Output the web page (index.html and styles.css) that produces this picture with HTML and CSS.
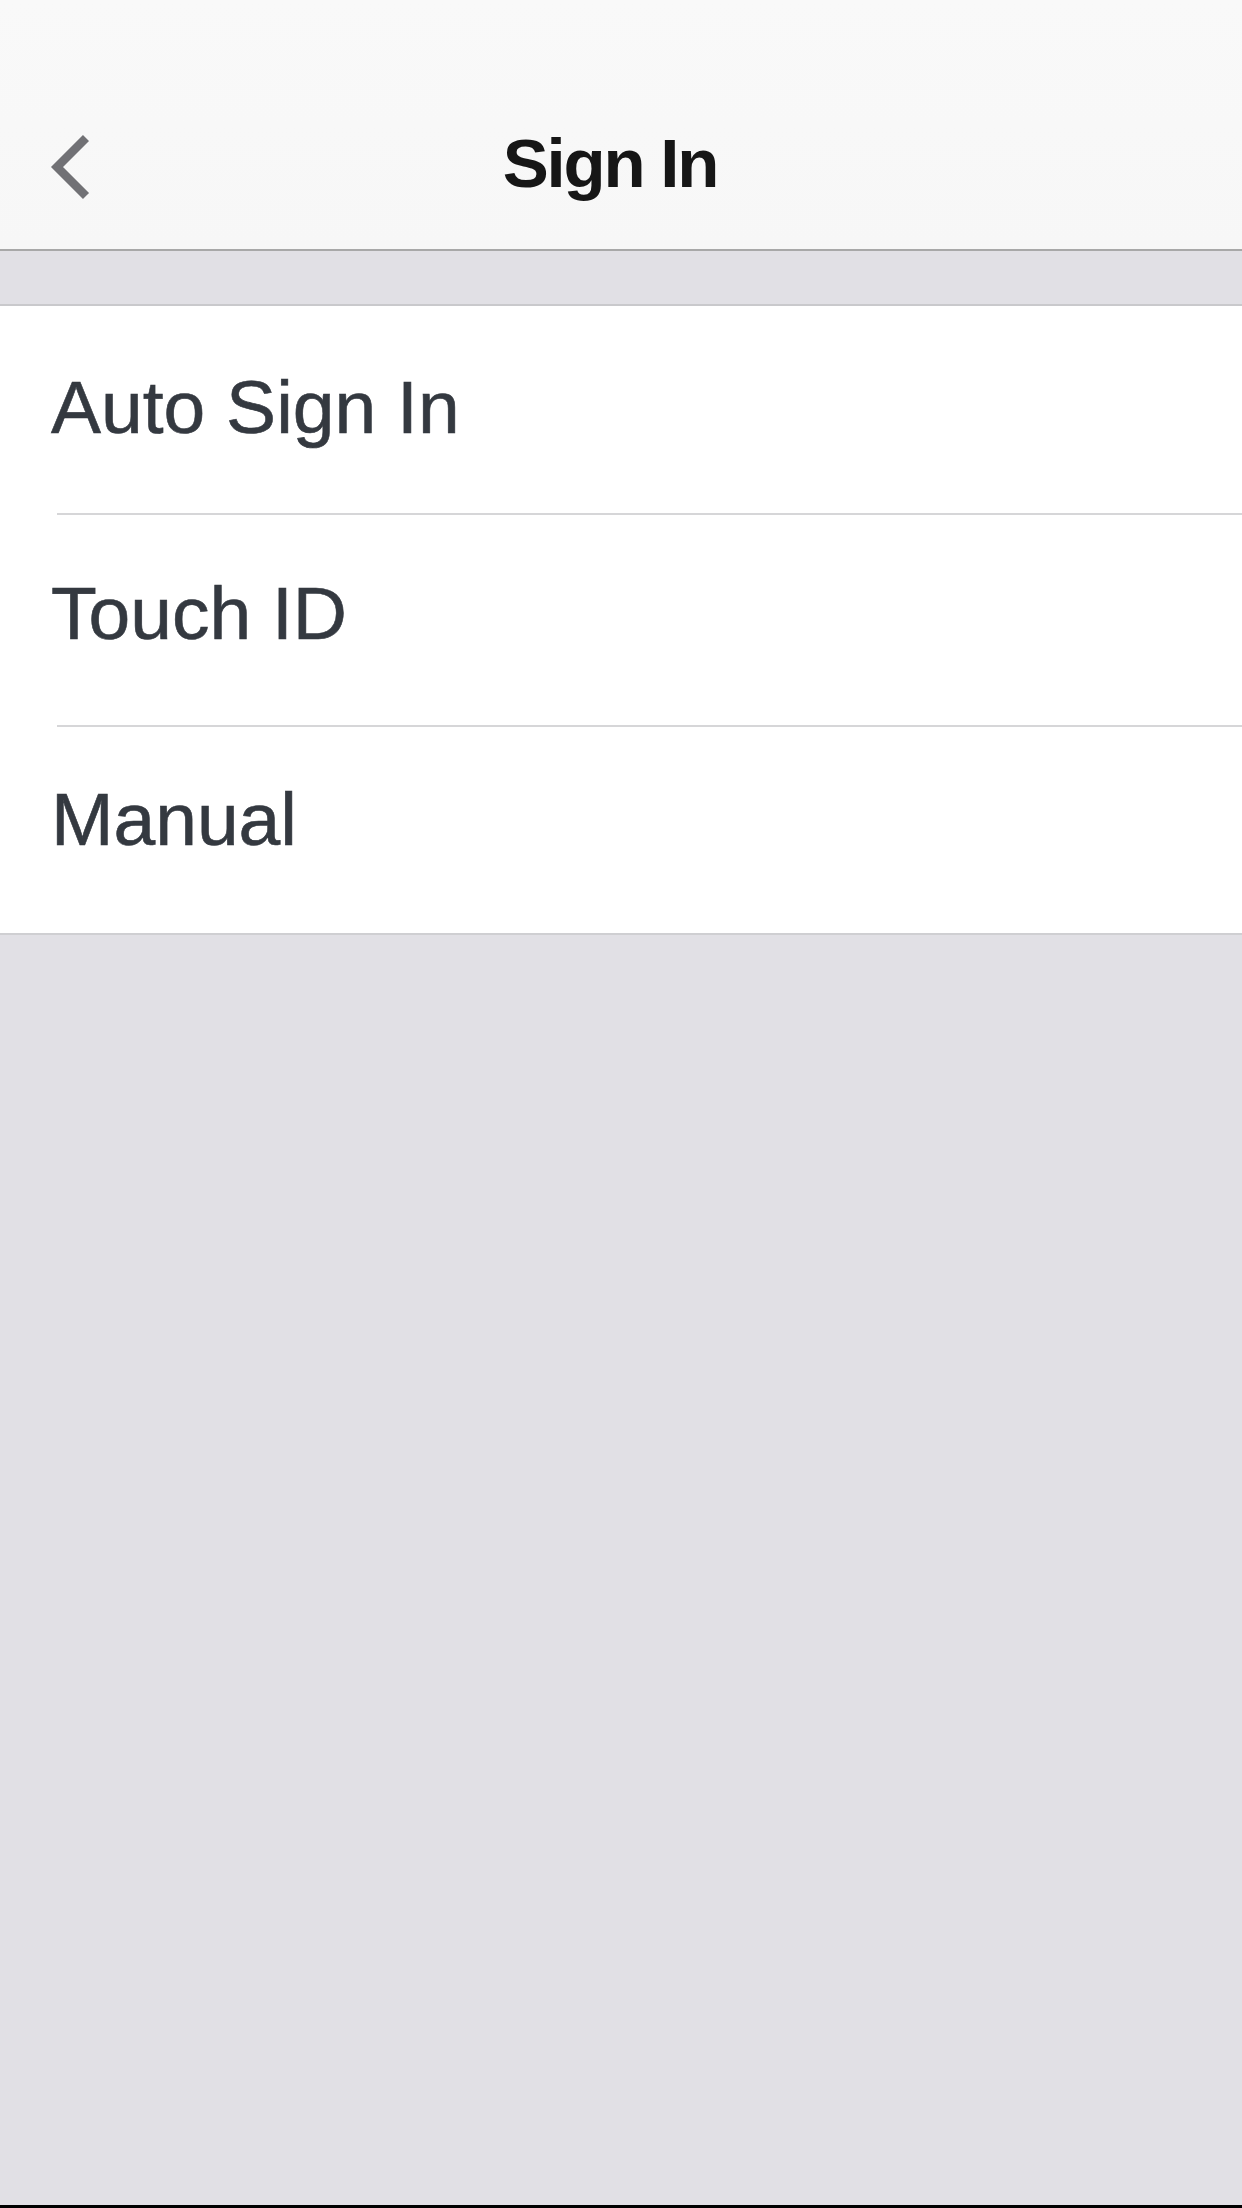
FILE: index.html
```html
<!DOCTYPE html>
<html lang="en">
<head>
<meta charset="utf-8">
<title>Sign In</title>
<link rel="stylesheet" href="styles.css">
</head>
<body>
<div class="screen">
  <header class="navbar">
    <div class="nav-row">
      <button class="back" aria-label="Back">
        <svg width="56" height="80" viewBox="0 0 56 80">
          <polyline points="43,14 14,43 43,72" fill="none" stroke="#717175" stroke-width="8.5" stroke-linecap="butt" stroke-linejoin="miter"/>
        </svg>
      </button>
      <h1 class="title">Sign In</h1>
    </div>
  </header>
  <div class="spacer"></div>
  <ul class="list">
    <li class="item item-auto"><span>Auto Sign In</span></li>
    <li class="item item-touch"><span>Touch ID</span></li>
    <li class="item item-manual"><span>Manual</span></li>
  </ul>
  <div class="fill"></div>
  <div class="bottom-bar"></div>
</div>
</body>
</html>
```

FILE: styles.css
```css
* { box-sizing: border-box; }
html, body {
  margin: 0;
  padding: 0;
  height: 100%;
}
body {
  background: #e1e0e5;
  font-family: "Liberation Sans", Arial, Helvetica, sans-serif;
}
.screen {
  display: flex;
  flex-direction: column;
  height: 2208px;
}
.navbar {
  height: 251px;
  padding-top: 84px;
  background: linear-gradient(#f9f9f9, #f7f7f7);
  border-bottom: 2px solid #a8a8a8;
}
.nav-row {
  position: relative;
  height: 165px;
  padding-bottom: 6px;
  display: flex;
  align-items: center;
  justify-content: center;
}
.back {
  position: absolute;
  left: 43px;
  top: 40px;
  width: 56px;
  height: 80px;
  padding: 0;
  border: 0;
  background: none;
  display: flex;
}
.title {
  margin: 0 22px 0 0;
  font-size: 69px;
  font-weight: bold;
  color: #161616;
  line-height: 1;
  letter-spacing: -2.2px;
}
.spacer {
  height: 55px;
  border-bottom: 2px solid #c9c9cc;
}
.list {
  list-style: none;
  margin: 0;
  padding: 0;
  background: #ffffff;
  border-bottom: 2px solid #cfcfd2;
}
.item {
  display: flex;
  align-items: flex-start;
  padding-left: 51px;
  padding-top: 64px;
  font-size: 75px;
  line-height: 1;
  color: #343940;
  -webkit-text-stroke: 0.6px #343940;
  position: relative;
}
.item-auto { height: 207px; }
.item-touch { height: 212px; padding-top: 63px; }
.item-manual { height: 208px; padding-top: 57px; }
.item + .item::before {
  content: "";
  position: absolute;
  left: 57px;
  right: 0;
  top: 0;
  height: 2px;
  background: #d6d6d8;
}
.fill {
  flex: 1;
  background: #e1e0e5;
}
.bottom-bar {
  height: 3px;
  background: #000;
}
```
